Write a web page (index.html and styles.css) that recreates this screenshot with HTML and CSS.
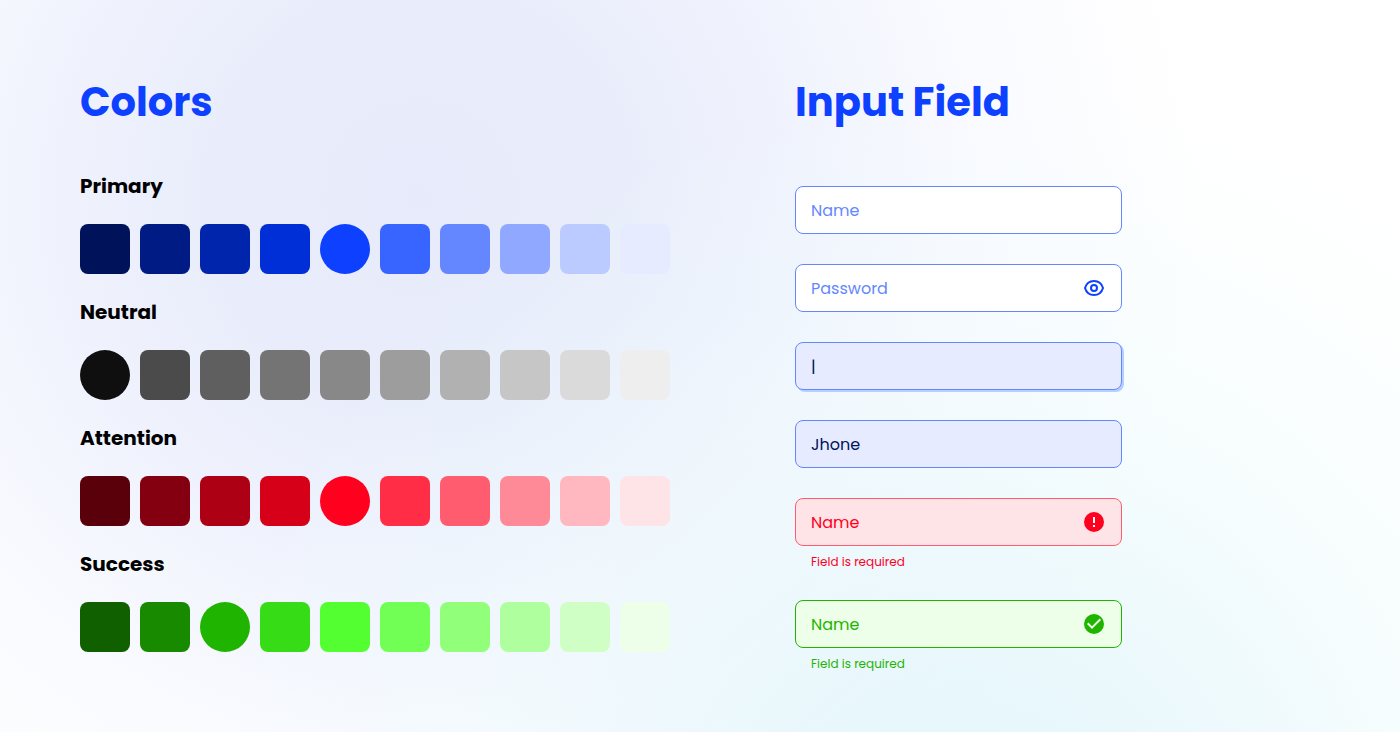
FILE: index.html
```html
<!DOCTYPE html>
<html lang="en">
<head>
<meta charset="utf-8">
<meta name="viewport" content="width=device-width, initial-scale=1">
<title>Style guide</title>
<link rel="stylesheet" href="styles.css">
</head>
<body>
<main class="guide">
  <section class="colors">
    <h1 class="title">Colors</h1>
    <div class="palettes">
      <section class="palette">
        <h2 class="palette-name">Primary</h2>
        <div class="swatches">
          <span class="swatch" style="background:#00135a"></span>
          <span class="swatch" style="background:#001c84"></span>
          <span class="swatch" style="background:#0025ad"></span>
          <span class="swatch" style="background:#002ed7"></span>
          <span class="swatch base" style="background:#0d41ff"></span>
          <span class="swatch" style="background:#3864ff"></span>
          <span class="swatch" style="background:#6487ff"></span>
          <span class="swatch" style="background:#90a8ff"></span>
          <span class="swatch" style="background:#bbcaff"></span>
          <span class="swatch" style="background:#e6ebff"></span>
        </div>
      </section>
      <section class="palette">
        <h2 class="palette-name">Neutral</h2>
        <div class="swatches">
          <span class="swatch base" style="background:#0f0f0f"></span>
          <span class="swatch" style="background:#4b4b4b"></span>
          <span class="swatch" style="background:#5f5f5f"></span>
          <span class="swatch" style="background:#747474"></span>
          <span class="swatch" style="background:#888888"></span>
          <span class="swatch" style="background:#9d9d9d"></span>
          <span class="swatch" style="background:#b1b1b1"></span>
          <span class="swatch" style="background:#c6c6c6"></span>
          <span class="swatch" style="background:#dadada"></span>
          <span class="swatch" style="background:#eeeeee"></span>
        </div>
      </section>
      <section class="palette">
        <h2 class="palette-name">Attention</h2>
        <div class="swatches">
          <span class="swatch" style="background:#5a000b"></span>
          <span class="swatch" style="background:#840010"></span>
          <span class="swatch" style="background:#ad0014"></span>
          <span class="swatch" style="background:#d70019"></span>
          <span class="swatch base" style="background:#ff001e"></span>
          <span class="swatch" style="background:#ff2e46"></span>
          <span class="swatch" style="background:#ff5c70"></span>
          <span class="swatch" style="background:#ff8a97"></span>
          <span class="swatch" style="background:#ffb8c0"></span>
          <span class="swatch" style="background:#ffe4e7"></span>
        </div>
      </section>
      <section class="palette">
        <h2 class="palette-name">Success</h2>
        <div class="swatches">
          <span class="swatch" style="background:#106000"></span>
          <span class="swatch" style="background:#188a00"></span>
          <span class="swatch base" style="background:#1fb400"></span>
          <span class="swatch" style="background:#36dd16"></span>
          <span class="swatch" style="background:#53ff30"></span>
          <span class="swatch" style="background:#72ff55"></span>
          <span class="swatch" style="background:#91ff7a"></span>
          <span class="swatch" style="background:#b0ff9f"></span>
          <span class="swatch" style="background:#cfffc4"></span>
          <span class="swatch" style="background:#edffe8"></span>
        </div>
      </section>
    </div>
  </section>

  <section class="inputs">
    <h1 class="title">Input Field</h1>
    <form class="fields">
      <div class="field">
        <div class="control">
          <input class="text" type="text" placeholder="Name" aria-label="Name">
        </div>
      </div>
      <div class="field">
        <div class="control">
          <input class="text" type="password" placeholder="Password" aria-label="Password">
          <button class="reveal" type="button" aria-label="Show password">
            <svg class="icon" viewBox="0 0 24 24" fill="none" stroke="currentColor" stroke-width="2" stroke-linejoin="round">
              <path d="M3 12C4.200 7.900 7.700 5 12 5s7.800 2.900 9 7c-1.200 4.100-4.700 7-9 7s-7.800-2.900-9-7z"/>
              <circle cx="12" cy="12" r="3"/>
            </svg>
          </button>
        </div>
      </div>
      <div class="field focused">
        <div class="control">
          <input class="text" type="text" value="|" aria-label="Focused name">
        </div>
      </div>
      <div class="field filled">
        <div class="control">
          <input class="text" type="text" value="Jhone" aria-label="Filled name">
        </div>
      </div>
      <div class="field error">
        <div class="control">
          <input class="text" type="text" placeholder="Name" aria-label="Name with error" aria-describedby="error-note">
          <svg class="icon" viewBox="0 0 24 24" aria-hidden="true">
            <circle cx="12" cy="12" r="10" fill="currentColor"/>
            <path d="M11 7h2v6h-2zM11 15h2v2h-2z" fill="#fff"/>
          </svg>
        </div>
        <p class="note" id="error-note">Field is required</p>
      </div>
      <div class="field success">
        <div class="control">
          <input class="text" type="text" placeholder="Name" aria-label="Valid name" aria-describedby="success-note">
          <svg class="icon" viewBox="0 0 24 24" aria-hidden="true">
            <circle cx="12" cy="12" r="10" fill="currentColor"/>
            <path d="M5.700 11.300l4.300 4.300 8.300-8.300" fill="none" stroke="#edffe8" stroke-width="2"/>
          </svg>
        </div>
        <p class="note" id="success-note">Field is required</p>
      </div>
    </form>
  </section>
</main>
</body>
</html>
```

FILE: styles.css
```css
* {
  box-sizing: border-box;
}

body {
  margin: 0;
  min-height: 100vh;
  font-family: Poppins, Inter, "Noto Sans", sans-serif;
  color: #000;
  background:
    radial-gradient(circle 780px at 69% 118%, rgba(222, 244, 251, 0.9) 0%, rgba(228, 246, 251, 0.75) 30%, rgba(236, 251, 252, 0.4) 62%, rgba(246, 253, 254, 0) 100%) no-repeat,
    radial-gradient(circle 780px at 30% 27%, #e6eafa 0%, #e9edfb 26%, #f0f3fd 48%, #f9faff 70%, #fff 100%) no-repeat,
    #fff;
}

.guide {
  display: grid;
  grid-template-columns: 715fr 525fr;
  padding: 72px 80px 60px;
}

.title {
  margin: 0;
  font-size: 40px;
  font-weight: 700;
  line-height: 60px;
  color: #0d41ff;
}

.palettes {
  display: grid;
  gap: 23px;
  margin-top: 39px;
}

.palette {
  display: grid;
  gap: 23px;
}

.palette-name {
  margin: 0;
  font-size: 20px;
  font-weight: 700;
  line-height: 30px;
}

.swatches {
  display: flex;
  flex-wrap: wrap;
  gap: 10px;
}

.swatch {
  width: 50px;
  height: 50px;
  border-radius: 8px;
}

.swatch.base {
  border-radius: 50%;
}

.fields {
  display: grid;
  grid-template-columns: minmax(0, 1fr);
  gap: 30px;
  max-width: 327px;
  margin-top: 54px;
}

.field {
  --ink: #6487ff;
  --line: #6487ff;
  --fill: #fff;
}

.control {
  display: flex;
  align-items: center;
  height: 48px;
  padding: 0 15px;
  border: 1px solid var(--line);
  border-radius: 8px;
  background: var(--fill);
}

.text {
  flex: 1;
  min-width: 0;
  padding: 2px 0 0;
  border: 0;
  outline: 0;
  background: none;
  font: inherit;
  font-size: 16px;
  line-height: 24px;
  color: var(--ink);
}

.text::placeholder {
  color: var(--ink);
  opacity: 1;
}

.reveal {
  display: flex;
  padding: 0;
  border: 0;
  background: none;
  color: #0d41ff;
  cursor: pointer;
}

.icon {
  flex: none;
  width: 24px;
  height: 24px;
  color: var(--ink);
}

.reveal .icon {
  color: inherit;
}

.focused,
.filled {
  --ink: #00135a;
  --fill: #e6ebff;
}

.focused .control {
  box-shadow: 2px 2px 0 #b5d0ff;
}

.error {
  --ink: #ff001e;
  --line: #ff5c70;
  --fill: #ffe4e7;
}

.success {
  --ink: #1fb400;
  --line: #1fb400;
  --fill: #edffe8;
}

.note {
  margin: 8px 0 0;
  padding-left: 16px;
  font-size: 12px;
  line-height: 16px;
  color: var(--ink);
}
```
